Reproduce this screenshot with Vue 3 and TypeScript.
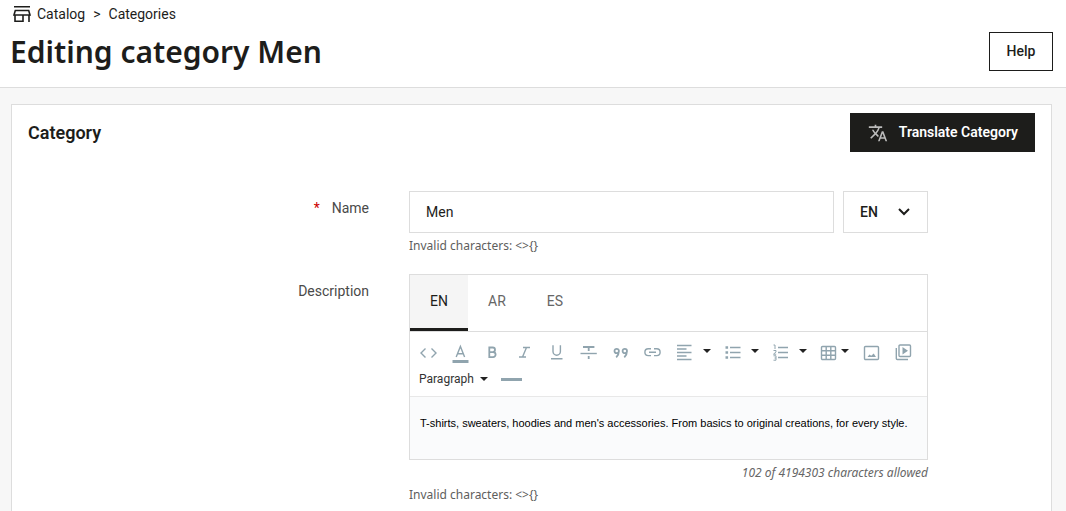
<script setup lang="ts">
import { ref } from 'vue'

interface Tool {
  name: string
  icon: string
  menu?: boolean
  tight?: boolean
}

const tools: Tool[] = [
  { name: 'Source code', icon: 'code' },
  { name: 'Text color', icon: 'color' },
  { name: 'Bold', icon: 'bold' },
  { name: 'Italic', icon: 'italic' },
  { name: 'Underline', icon: 'underline' },
  { name: 'Strikethrough', icon: 'strike' },
  { name: 'Blockquote', icon: 'quote' },
  { name: 'Link', icon: 'link' },
  { name: 'Align', icon: 'align', menu: true },
  { name: 'Bullet list', icon: 'bullets', menu: true },
  { name: 'Numbered list', icon: 'numbers', menu: true },
  { name: 'Table', icon: 'table', menu: true, tight: true },
  { name: 'Image', icon: 'image' },
  { name: 'Video', icon: 'video' },
]

const languages = ['EN', 'AR', 'ES']
const activeTab = ref('EN')
const nameLanguage = ref('EN')
const name = ref('Men')
const block = ref('Paragraph')
const description = ref(
  "T-shirts, sweaters, hoodies and men's accessories. From basics to original creations, for every style.",
)
</script>

<template>
  <div class="page">
    <header class="header">
      <nav class="crumbs" aria-label="Breadcrumb">
        <a href="#" class="crumb">
          <svg class="store" viewBox="0 0 20 18" aria-hidden="true">
            <path d="M2 1.800h16M3.300 5.500h13.400l1.300 4.500H2zM3 10v6.200h8V10M17 10v7" />
          </svg>
          <span>Catalog</span>
        </a>
        <span class="sep">&gt;</span>
        <a href="#" class="crumb">Categories</a>
      </nav>
      <div class="title-row">
        <h1>Editing category Men</h1>
        <button type="button" class="help">Help</button>
      </div>
    </header>

    <main class="panel">
      <div class="panel-head">
        <h2>Category</h2>
        <button type="button" class="translate">
          <svg viewBox="0 0 24 24" aria-hidden="true">
            <path d="M12.870 15.070l-2.540-2.510.030-.030A17.520 17.520 0 0 0 14.070 6H17V4h-7V2H8v2H1v1.990h11.170C11.500 7.920 10.440 9.750 9 11.350 8.070 10.320 7.300 9.190 6.690 8h-2c.730 1.630 1.730 3.170 2.980 4.560l-5.090 5.020L4 19l5-5 3.110 3.110.760-2.040zM18.500 10h-2L12 22h2l1.120-3h4.750L21 22h2l-4.500-12zm-2.620 7l1.620-4.330L19.120 17h-3.240z" />
          </svg>
          <span>Translate Category</span>
        </button>
      </div>

      <form class="form" @submit.prevent>
        <div class="row">
          <label class="label" for="name"><span class="star">*</span>Name</label>
          <div class="field">
            <div class="name-row">
              <input id="name" v-model="name" type="text" class="name-input" />
              <div class="lang">
                <select v-model="nameLanguage" aria-label="Language">
                  <option v-for="l in languages" :key="l">{{ l }}</option>
                </select>
                <svg viewBox="0 0 12 8" aria-hidden="true"><path d="M1 1l5 5 5-5" /></svg>
              </div>
            </div>
            <p class="hint">Invalid characters: &lt;&gt;{}</p>
          </div>
        </div>

        <div class="row">
          <label class="label" for="description">Description</label>
          <div class="field">
            <div class="editor">
              <div class="tabs" role="tablist">
                <button
                  v-for="l in languages"
                  :key="l"
                  type="button"
                  role="tab"
                  class="tab"
                  :class="{ active: l === activeTab }"
                  :aria-selected="l === activeTab"
                  @click="activeTab = l"
                >{{ l }}</button>
              </div>
              <div class="toolbar">
                <div class="tools">
                  <button
                    v-for="t in tools"
                    :key="t.icon"
                    type="button"
                    class="tool"
                    :class="{ menu: t.menu, tight: t.tight }"
                    :aria-label="t.name"
                  >
                    <svg class="icon" viewBox="0 0 20 20" aria-hidden="true">
                      <path v-if="t.icon === 'code'" d="M7.500 6.500L3 11l4.500 4.500M13.500 6.500L18 11l-4.500 4.500" />
                      <g v-else-if="t.icon === 'color'">
                        <path d="M6.200 15l4.200-10.500L14.600 15M7.600 11.700h5.600" />
                        <path class="solid" d="M2.500 18h16v3h-16z" />
                      </g>
                      <path v-else-if="t.icon === 'bold'" class="thick" d="M7.300 5.500v9.600h3.800a2.500 2.500 0 0 0 0-5H7.300h3.400a2.300 2.300 0 0 0 0-4.600z" />
                      <path v-else-if="t.icon === 'italic'" d="M9 5.500h7M5 15h7M12.500 5.500L8.500 15" />
                      <path v-else-if="t.icon === 'underline'" d="M7 3.300v6.200a3.700 3.700 0 0 0 7.400 0V3.300M5 16.700h11.500" />
                      <g v-else-if="t.icon === 'strike'">
                        <path d="M2.500 11.500h16.300" />
                        <path class="thick" d="M5 5h11.400M10.700 5v4M10.700 14v3" />
                      </g>
                      <path v-else-if="t.icon === 'quote'" class="thick" d="M8.900 9a2.200 2.200 0 1 0-4.400 0a2.200 2.200 0 0 0 4.400 0c0 2.500-.8 4.500-2.700 6.300M17 9a2.200 2.200 0 1 0-4.400 0a2.200 2.200 0 0 0 4.400 0c0 2.500-.8 4.500-2.700 6.300" />
                      <path v-else-if="t.icon === 'link'" d="M9 6.800H6.300a3.400 3.400 0 0 0 0 6.800H9M12 6.800h2.700a3.400 3.400 0 0 1 0 6.800H12M7 10.200h7" />
                      <path v-else-if="t.icon === 'align'" d="M3 3.500h14.500M3 7h9.500M3 10.500h14.500M3 14h9.500M3 17.500h14.500" />
                      <g v-else-if="t.icon === 'bullets'">
                        <path d="M8 5.500h10.500M8 10.500h10.500M8 15.500h10.500" />
                        <path class="solid" d="M3.500 4.200h2.600v2.600H3.500zM3.500 9.200h2.600v2.600H3.500zM3.500 14.200h2.600v2.600H3.500z" />
                      </g>
                      <g v-else-if="t.icon === 'numbers'">
                        <path d="M8 5.500h10M8 10.500h10M8 15.500h10" />
                        <path class="thin" d="M3.500 3h1.500v4M3.500 8.500h2.500v1.400l-2.500 2.300h2.700M3.500 13.800h2.500v4.400H3.500M4.500 16h1.500" />
                      </g>
                      <path v-else-if="t.icon === 'table'" d="M4.500 4.500h12a1 1 0 0 1 1 1v11a1 1 0 0 1-1 1h-12a1 1 0 0 1-1-1v-11a1 1 0 0 1 1-1zM8.200 4.500v13M12.800 4.500v13M3.500 8.800h14M3.500 13.200h14" />
                      <g v-else-if="t.icon === 'image'">
                        <path d="M4.500 4.500h12a1 1 0 0 1 1 1v11a1 1 0 0 1-1 1h-12a1 1 0 0 1-1-1v-11a1 1 0 0 1 1-1z" />
                        <path class="solid" d="M6.500 15l2-2.500 1.700 1.300 2.500-2.300 2.300 3.500z" />
                      </g>
                      <g v-else>
                        <path d="M7 3h9.500a1 1 0 0 1 1 1v9.500a1 1 0 0 1-1 1H7a1 1 0 0 1-1-1V4a1 1 0 0 1 1-1zM3.300 6v10.500a1 1 0 0 0 1 1H15" />
                        <path class="solid" d="M9.500 5l5.500 3.800-5.500 3.800z" />
                      </g>
                    </svg>
                    <svg v-if="t.menu" class="caret" viewBox="0 0 8 4" aria-hidden="true"><path d="M0 0h8L4 4z" /></svg>
                  </button>
                </div>
                <div class="tools second">
                  <div class="block">
                    <select v-model="block" aria-label="Block format">
                      <option>Paragraph</option>
                      <option>Heading 1</option>
                    </select>
                    <svg class="caret" viewBox="0 0 8 4" aria-hidden="true"><path d="M0 0h8L4 4z" /></svg>
                  </div>
                  <button type="button" class="rule" aria-label="Horizontal line"></button>
                </div>
              </div>
              <textarea id="description" v-model="description" class="content" rows="1"></textarea>
            </div>
            <p class="count">102 of 4194303 characters allowed</p>
            <p class="hint">Invalid characters: &lt;&gt;{}</p>
          </div>
        </div>
      </form>
    </main>
  </div>
</template>

<style>
body {
  margin: 0;
  background: #f7f7f7;
  overflow: hidden;
}
</style>

<style scoped>
* {
  box-sizing: border-box;
}
.page {
  min-height: 100vh;
  display: flex;
  flex-direction: column;
  font-family: Roboto, "Noto Sans", sans-serif;
  font-size: 14px;
  color: #1d1d1b;
}
button,
input,
select,
textarea {
  font: inherit;
  color: inherit;
  margin: 0;
  border-radius: 0;
}
h1,
h2,
p {
  margin: 0;
}
.header {
  background: #fff;
  border-bottom: 1px solid #ddd;
  padding: 4px 13px 16px 10px;
}
.crumbs {
  display: flex;
  align-items: center;
  gap: 8px;
  height: 20px;
  padding-left: 2px;
}
.crumb {
  display: flex;
  align-items: center;
  gap: 5px;
  color: inherit;
  text-decoration: none;
}
.store {
  width: 20px;
  height: 18px;
  fill: none;
  stroke: #1d1d1b;
  stroke-width: 1.6;
}
.title-row {
  display: flex;
  justify-content: space-between;
  align-items: center;
  margin-top: 8px;
}
h1 {
  font-family: "Noto Sans", sans-serif;
  font-size: 30px;
  line-height: 39px;
  font-weight: 600;
}
.help {
  width: 64px;
  height: 39px;
  border: 1px solid #1d1d1b;
  background: #fff;
  font-weight: 500;
  padding: 0 0 2px;
}
.panel {
  flex: 1;
  background: #fff;
  border: 1px solid #ddd;
  border-bottom: 0;
  margin: 16px 14px 0 11px;
  padding: 8px 16px 0;
}
.panel-head {
  display: flex;
  justify-content: space-between;
  align-items: center;
}
h2 {
  font-size: 18px;
  line-height: 24px;
  font-weight: 600;
}
.translate {
  display: flex;
  align-items: center;
  gap: 11px;
  height: 39px;
  padding: 0 17px 0 18px;
  border: 0;
  background: #1d1d1b;
  color: #fff;
  font-weight: 600;
}
.translate span {
  padding-bottom: 2px;
}
.translate svg {
  width: 20px;
  height: 20px;
  fill: #bbb;
}
.form {
  padding-top: 39px;
}
.row {
  display: grid;
  grid-template-columns: 381fr 519fr 107fr;
  margin-bottom: 20px;
}
.label {
  padding: 7px 40px 0 0;
  text-align: right;
  line-height: 20px;
  color: #4a4a49;
}
.star {
  color: #c00;
  margin-right: 12px;
}
.field {
  min-width: 0;
}
.name-row {
  display: flex;
  gap: 9px;
}
.name-input {
  flex: 1;
  min-width: 0;
  height: 42px;
  padding: 0 16px;
  border: 1px solid #ddd;
  background: #fff;
}
.lang {
  position: relative;
  width: 85px;
}
.lang select {
  width: 100%;
  height: 42px;
  padding: 0 16px;
  border: 1px solid #ddd;
  background: #fff;
  appearance: none;
  font-weight: 500;
}
.lang svg {
  position: absolute;
  right: 18px;
  top: 17px;
  width: 12px;
  height: 8px;
  fill: none;
  stroke: #1d1d1b;
  stroke-width: 2;
  pointer-events: none;
}
.hint {
  margin-top: 5px;
  font-family: "Noto Sans", sans-serif;
  font-size: 12px;
  line-height: 16px;
  color: #5e5e5d;
}
.editor {
  border: 1px solid #ddd;
}
.tabs {
  display: flex;
  height: 57px;
  border-bottom: 1px solid #ddd;
}
.tab {
  width: 58px;
  height: 56px;
  padding: 0 0 1px;
  border: 0;
  border-bottom: 3px solid transparent;
  background: #fff;
  color: #666;
}
.tab.active {
  background: #f5f5f5;
  border-bottom-color: #1d1d1b;
  color: #1d1d1b;
}
.toolbar {
  padding: 4px 2px 6px;
}
.tools {
  display: flex;
  align-items: center;
}
.tool {
  display: flex;
  flex: none;
  align-items: center;
  gap: 9px;
  width: 32px;
  height: 32px;
  padding: 0 6px;
  border: 0;
  background: none;
}
.tool.menu {
  width: 48px;
}
.tool.tight {
  width: 43px;
  gap: 3px;
}
.icon {
  flex: none;
  width: 20px;
  height: 20px;
  overflow: visible;
  fill: none;
  stroke: #90a4ae;
  stroke-width: 1.4;
}
.solid {
  fill: #90a4ae;
  stroke: none;
}
.thick {
  stroke-width: 1.8;
}
.thin {
  stroke-width: 1;
}
.caret {
  flex: none;
  width: 8px;
  height: 4px;
  fill: #222;
}
.tool .caret {
  margin-bottom: 2px;
}
.second {
  height: 22px;
  padding-left: 7px;
  gap: 13px;
}
.block {
  display: flex;
  align-items: center;
  position: relative;
}
.block select {
  appearance: none;
  width: 69px;
  height: 20px;
  padding: 0;
  border: 0;
  background: none;
  font-size: 12px;
  color: #333;
}
.block .caret {
  position: absolute;
  right: 0;
  pointer-events: none;
}
.rule {
  width: 21px;
  height: 3px;
  padding: 0;
  border: 0;
  background: #90a4ae;
}
.content {
  display: block;
  width: 100%;
  height: 63px;
  padding: 18px 10px;
  border: 0;
  border-top: 1px solid #e8e8e8;
  background: #fafbfc;
  font-family: "Liberation Sans", Arial, sans-serif;
  font-size: 11px;
  line-height: 16px;
  color: #000;
  resize: none;
  overflow: hidden;
}
.count {
  margin-top: 5px;
  font-family: "Noto Sans", sans-serif;
  font-size: 12px;
  line-height: 16px;
  font-style: italic;
  text-align: right;
  color: #666;
}
.count + .hint {
  margin-top: 6px;
}
</style>
